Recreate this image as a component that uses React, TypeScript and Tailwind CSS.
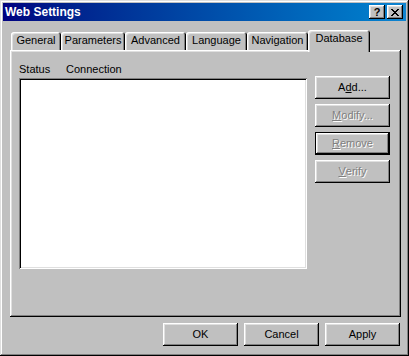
import type { ReactNode } from "react";

const raised =
  "shadow-[inset_-1px_-1px_#000,inset_1px_1px_#fff,inset_-2px_-2px_#808080,inset_2px_2px_#dfdfdf]";

function Btn({ children, disabled, isDefault }: { children: ReactNode; disabled?: boolean; isDefault?: boolean }) {
  return (
    <button
      className={
        "w-[75px] h-[23px] bg-[#c0c0c0] flex items-center justify-center leading-[13px] " +
        raised +
        (isDefault ? " border border-black" : "") +
        (disabled ? " text-[#808080] [text-shadow:1px_1px_0_#fff]" : " text-black")
      }
    >
      {children}
    </button>
  );
}

function Tab({ label, width, selected }: { label: string; width: string; selected?: boolean }) {
  return (
    <div
      className={
        width +
        " bg-[#c0c0c0] rounded-t-[3px] flex justify-center leading-[13px] shadow-[inset_1px_1px_#fff,inset_-1px_0_#000,inset_-2px_0_#808080,inset_2px_2px_#dfdfdf] " +
        (selected ? "h-[22px] -mb-[2px] pt-[2px] relative z-10" : "h-[18px] pt-[2px]")
      }
    >
      {label}
    </div>
  );
}

export default function App() {
  return (
    <div className="w-[409px] h-[356px] bg-[#c0c0c0] p-[3px] flex flex-col text-[11px] text-black font-['Liberation_Sans',Arial,sans-serif] shadow-[inset_-1px_-1px_#000,inset_1px_1px_#dfdfdf,inset_-2px_-2px_#808080,inset_2px_2px_#fff]">
      {/* title bar */}
      <div className="h-[18px] flex items-center bg-linear-to-r from-[#000080] to-[#1084d0] pl-[2px] pr-[3px]">
        <span className="flex-1 text-white font-bold text-[12px] leading-[14px]">Web Settings</span>
        <div className="flex gap-[2px]">
          <div className={"w-[16px] h-[14px] bg-[#c0c0c0] flex items-center justify-center font-bold text-[11px] leading-none " + raised}>
            ?
          </div>
          <div className={"w-[16px] h-[14px] bg-[#c0c0c0] flex items-center justify-center " + raised}>
            <svg width="8" height="7" viewBox="0 0 8 7" shapeRendering="crispEdges">
              <path d="M0 0h2v1H0zM6 0h2v1H6zM1 1h2v1H1zM5 1h2v1H5zM2 2h4v1H2zM3 3h2v1H3zM2 4h4v1H2zM1 5h2v1H1zM5 5h2v1H5zM0 6h2v1H0zM6 6h2v1H6z" fill="#000" />
            </svg>
          </div>
        </div>
      </div>

      {/* tabs */}
      <div className="pl-[7px] pr-[5px] pt-[9px]">
        <div className="h-[20px] flex items-end pl-[1px]">
          <Tab label="General" width="w-[50px]" />
          <Tab label="Parameters" width="w-[64px]" />
          <Tab label="Advanced" width="w-[61px]" />
          <Tab label="Language" width="w-[61px]" />
          <Tab label="Navigation" width="w-[61px]" />
          <Tab label="Database" width="w-[62px]" selected />
        </div>
        <div className="h-[267px] bg-[#c0c0c0] flex pl-[9px] pr-[11px] pt-[13px] shadow-[inset_-1px_-1px_#000,inset_1px_1px_#fff,inset_-2px_-2px_#808080,inset_2px_2px_#dfdfdf]">
          <div className="flex flex-col w-[288px]">
            <div className="flex h-[13px] leading-[13px]">
              <span className="w-[47px]">Status</span>
              <span>Connection</span>
            </div>
            <div className="mt-[2px] h-[191px] bg-white shadow-[inset_1px_1px_#808080,inset_-1px_-1px_#fff,inset_2px_2px_#000,inset_-2px_-2px_#dfdfdf]" />
          </div>
          <div className="ml-auto flex flex-col gap-[5px] pt-[13px]">
            <Btn>
              A<u>d</u>d...
            </Btn>
            <Btn disabled>
              <u>M</u>odify...
            </Btn>
            <Btn disabled isDefault>
              <u>R</u>emove
            </Btn>
            <Btn disabled>
              <u>V</u>erify
            </Btn>
          </div>
        </div>
      </div>

      {/* dialog buttons */}
      <div className="flex justify-end gap-[6px] mt-[6px] pr-[6px]">
        <Btn>OK</Btn>
        <Btn>Cancel</Btn>
        <Btn>Apply</Btn>
      </div>
    </div>
  );
}
